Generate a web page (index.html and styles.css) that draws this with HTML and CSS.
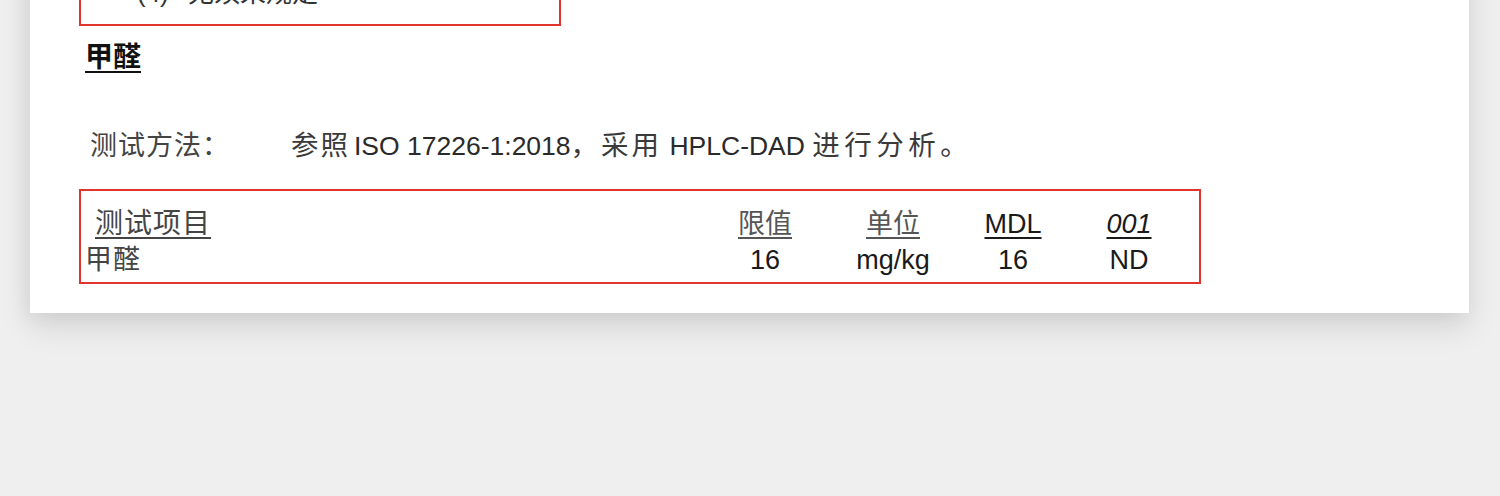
FILE: index.html
```html
<!DOCTYPE html>
<html lang="zh-CN">
<head>
<meta charset="utf-8">
<title>甲醛</title>
<link rel="stylesheet" href="styles.css">
</head>
<body>
<div class="card">
  <div class="topbox"><span class="num">(4)</span><span class="tbtext">无须采规定</span></div>
  <h2 class="heading">甲醛</h2>
  <div class="method">
    <span class="mlabel">测试方法：</span>
    <span class="mtext"><span class="cj">参照</span>ISO 17226-1:2018<span class="cj">，采用</span> HPLC-DAD <span class="cj wide">进行分析。</span></span>
  </div>
  <div class="tbox">
    <div class="row head">
      <span class="c0 item"><u>测试项目</u></span>
      <span class="cc"><u>限值</u></span>
      <span class="cc"><u>单位</u></span>
      <span class="cc"><u>MDL</u></span>
      <span class="cc"><u><i>001</i></u></span>
    </div>
    <div class="row data">
      <span class="c0">甲醛</span>
      <span class="cc">16</span>
      <span class="cc">mg/kg</span>
      <span class="cc">16</span>
      <span class="cc">ND</span>
    </div>
  </div>
</div>
</body>
</html>
```

FILE: styles.css
```css
html, body {
  margin: 0;
  padding: 0;
}
body {
  background: #efefef;
  font-family: "Liberation Sans", "Noto Sans CJK SC", sans-serif;
  color: #222;
  overflow: hidden;
  height: 496px;
}
.card {
  margin: -60px 31px 0 30px;
  background: #fff;
  padding: 0 0 29px 49px;
  box-shadow: 0 14px 30px rgba(0, 0, 0, 0.11), -4px 4px 18px rgba(0, 0, 0, 0.05);
}
.topbox {
  box-sizing: border-box;
  width: 482px;
  border: 2px solid #e2332f;
  padding: 33px 0 13px 56px;
  line-height: 36px;
  font-size: 26px;
  color: #333;
  display: flex;
}
.topbox .num {
  width: 51px;
}
.heading {
  margin: 14px 0 0 6px;
  font-size: 28px;
  line-height: 36px;
  font-weight: 700;
  color: #111;
  text-decoration: underline;
  text-decoration-thickness: 2px;
  text-underline-offset: 4px;
}
.method {
  margin-top: 52px;
  padding-left: 11px;
  display: flex;
  font-size: 26.5px;
  line-height: 36px;
  color: #2a2a2a;
}
.mlabel {
  width: 201px;
  color: #444;
  font-size: 27px;
  letter-spacing: 1px;
}
.cj {
  font-size: 27.5px;
  letter-spacing: 3px;
  color: #3a3a3a;
}
.cj:first-child {
  letter-spacing: 2px;
  margin-right: 4px;
}
.cj.wide {
  letter-spacing: 4.5px;
}
.tbox {
  margin-top: 25px;
  width: 1118px;
  border: 2px solid #e2332f;
  padding: 15px 0 4px 0;
}
.row {
  display: grid;
  grid-template-columns: 620px 128px 128px 112px 120px;
  line-height: 36px;
  font-size: 27px;
}
.c0 {
  padding-left: 4px;
  color: #444;
  letter-spacing: 1px;
}
.c0.item {
  padding-left: 14px;
  font-size: 28px;
}
.cc {
  text-align: center;
  color: #1a1a1a;
}
.head .cc {
  color: #555;
}
.head .cc:nth-child(4),
.head .cc:nth-child(5) {
  color: #1a1a1a;
}
u {
  text-decoration-thickness: 2px;
  text-underline-offset: 4px;
}
```
